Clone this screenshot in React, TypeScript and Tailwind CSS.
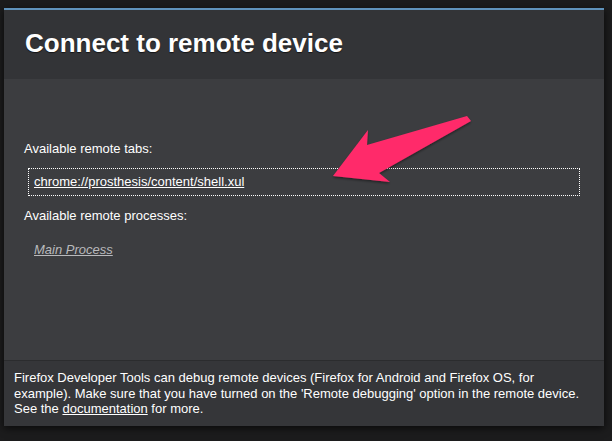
export default function App() {
  return (
    <div className="relative h-[441px] w-[612px] overflow-hidden bg-[#1c1c1d] pl-[4px] pt-[8px] font-['Liberation_Sans',Arial,sans-serif]">
      <div className="flex h-[418px] w-[600px] flex-col shadow-[0_2px_8px_rgba(0,0,0,0.7)]">
        {/* Header */}
        <div className="h-[71px] border-t-2 border-[#5f92bb] bg-[#333437] pl-[21px] pt-[20px]">
          <h1 className="text-[26px] font-bold leading-[26px] text-white [text-shadow:0_1px_1px_rgba(0,0,0,0.6)]">
            Connect to remote device
          </h1>
        </div>

        {/* Body */}
        <div className="h-[281px] bg-[#3c3d40] pl-[20px] pr-[24px] pt-[62px] text-[13px] leading-[16px] text-white">
          <p>Available remote tabs:</p>
          <div className="mt-[11px] ml-[4px] border border-dotted border-white pb-[5px] pl-[5px] pt-[5px]">
            <a className="underline">chrome://prosthesis/content/shell.xul</a>
          </div>
          <p className="mt-[12px]">Available remote processes:</p>
          <p className="mt-[18px] pl-[10px]">
            <a className="italic text-[#b9babd] underline">Main Process</a>
          </p>
        </div>

        {/* Footer */}
        <div className="h-[66px] border-t border-[#2b2c2e] bg-[#353639] pl-[10px] pr-[14px] pt-[9px] text-[13px] leading-[15.5px] text-white">
          <p>
            Firefox Developer Tools can debug remote devices (Firefox for Android and Firefox OS, for example). Make
            sure that you have turned on the 'Remote debugging' option in the remote device. See the{" "}
            <a className="underline">documentation</a> for more.
          </p>
        </div>
      </div>

      {/* Annotation arrow */}
      <svg className="pointer-events-none absolute left-0 top-0" width="612" height="441" viewBox="0 0 612 441">
        <defs>
          <filter id="sh" x="-10%" y="-10%" width="120%" height="130%">
            <feDropShadow dx="0" dy="1.5" stdDeviation="1" floodColor="#000" floodOpacity="0.45" />
          </filter>
        </defs>
        <polygon
          points="333,176 368,130 367,145 467,116 471,121 379,173 390,182"
          fill="#ff2b6b"
          strokeLinejoin="round"
          filter="url(#sh)"
        />
      </svg>
    </div>
  );
}
